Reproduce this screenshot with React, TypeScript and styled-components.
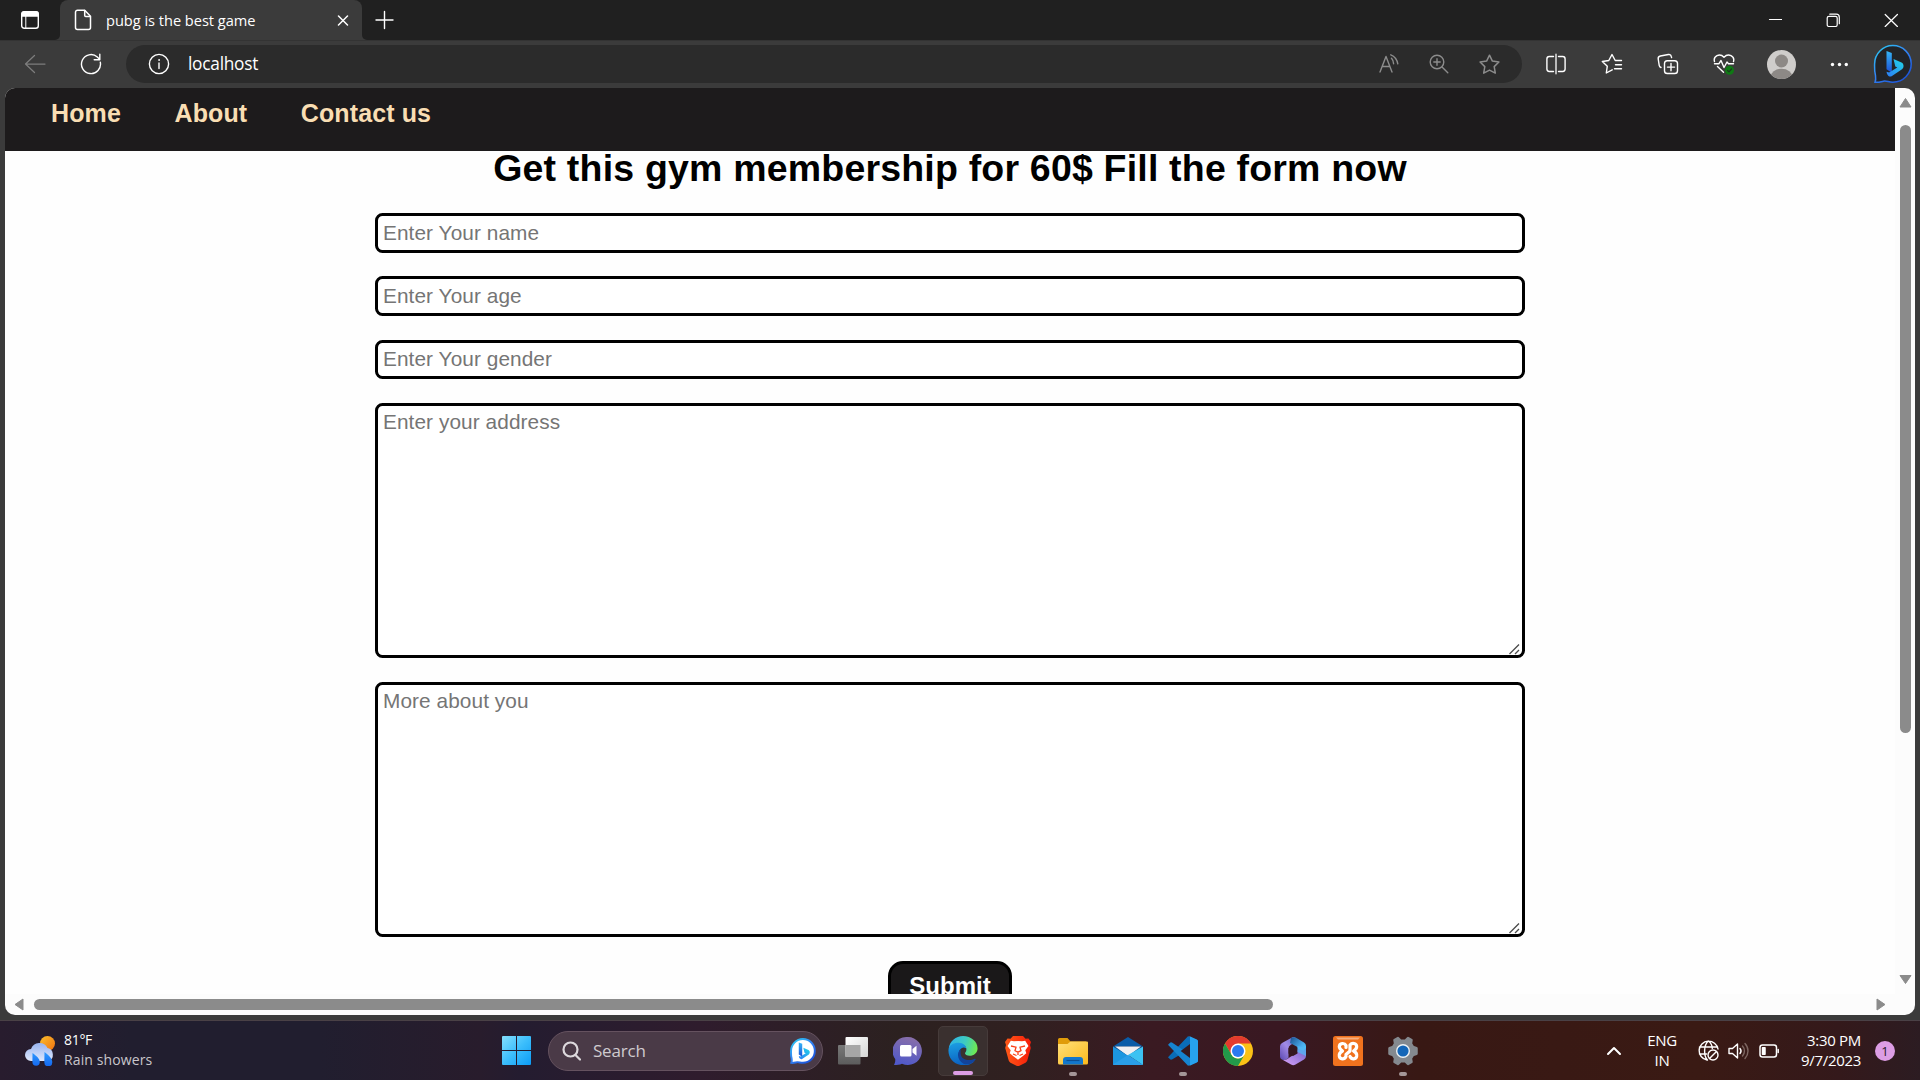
import React from "react";
import styled, { createGlobalStyle } from "styled-components";

const GlobalStyle = createGlobalStyle`
  * { box-sizing: border-box; }
  body { margin: 0; background: #3b3b3b; overflow: hidden; }
`;

const ui = `"Open Sans", "Noto Sans", sans-serif`;
const arial = `"Liberation Sans", Arial, sans-serif`;

const Screen = styled.div`
  width: 1920px;
  height: 1080px;
  display: flex;
  flex-direction: column;
  background: #3b3b3b;
  font-family: ${ui};
  overflow: hidden;
`;

/* Title bar */
const TitleBar = styled.div`
  height: 40px;
  display: flex;
  background: #3b3b3b;
`;
const TabActions = styled.div`
  width: 60px;
  display: flex;
  align-items: center;
  justify-content: center;
  background: #202020;
  border-bottom-right-radius: 5px;
`;
const Tab = styled.div`
  width: 302px;
  display: flex;
  align-items: center;
  padding: 0 13px 0 14px;
  background: #3b3b3b;
`;
const TabWrap = styled.div`
  background: #202020;
  ${Tab} { height: 40px; border-radius: 8px 8px 0 0; }
`;
const TabTitle = styled.span`
  margin-left: 14px;
  flex: 1;
  font-size: 14.6px;
  line-height: 20px;
  letter-spacing: -0.02px;
  white-space: nowrap;
  color: #fff;
`;
const TabStrip = styled.div`
  flex: 1;
  display: flex;
  align-items: center;
  justify-content: space-between;
  padding-left: 12px;
  background: #202020;
  border-bottom-left-radius: 5px;
`;
const WindowButtons = styled.div`
  display: flex;
  height: 40px;
`;
const Cell = styled.div<{ $w: number }>`
  width: ${(p) => p.$w}px;
  flex: none;
  display: flex;
  align-items: center;
  justify-content: center;
`;

/* Toolbar */
const Toolbar = styled.div`
  height: 48px;
  display: flex;
  align-items: center;
  padding-left: 7px;
  box-shadow: inset 0 1px 0 #333;
  background: #3b3b3b;
`;
const AddressBar = styled.div`
  width: 1396px;
  height: 38px;
  margin-left: 7px;
  margin-right: 6px;
  display: flex;
  align-items: center;
  padding: 0 8px 0 8px;
  border-radius: 19px;
  background: #2b2b2b;
`;
const Url = styled.span`
  flex: 1;
  margin-left: 4px;
  font-size: 17.3px;
  line-height: 24px;
  letter-spacing: -0.25px;
  color: #fff;
`;

/* Viewport */
const Viewport = styled.div`
  width: 1910px;
  height: 927px;
  margin-left: 5px;
  display: grid;
  grid-template-columns: 1890px 20px;
  grid-template-rows: 906px 21px;
  border-radius: 10px;
  overflow: hidden;
`;
const Page = styled.div`
  overflow: hidden;
  background: #fefefe;
  font-family: ${arial};
`;
const Nav = styled.nav`
  height: 63px;
  display: flex;
  gap: 53.5px;
  padding: 11px 0 0 46px;
  background: #1d1b1c;
`;
const NavLink = styled.a`
  font-size: 25px;
  line-height: 29px;
  font-weight: bold;
  letter-spacing: 0.12px;
  color: #f9deb3;
`;
const Form = styled.form`
  display: flex;
  flex-direction: column;
  align-items: center;
`;
const Heading = styled.h1`
  margin: 0 0 28px;
  font-size: 37.5px;
  line-height: 34px;
  font-weight: bold;
  letter-spacing: 0.19px;
  color: #000;
  white-space: nowrap;
`;
const Input = styled.input`
  width: 1150px;
  height: 39.5px;
  margin: 0 0 23.75px;
  padding: 0 5px;
  border: 3px solid #000;
  border-radius: 7.5px;
  background: #fff;
  font: 20.8px ${arial};
  letter-spacing: 0.08px;
  outline: none;
  &::placeholder { color: #757575; }
`;
const Field = styled.div`
  position: relative;
  width: 1150px;
  height: 255px;
  margin: 0 0 24px;
`;
const TextArea = styled.textarea`
  display: block;
  width: 100%;
  height: 100%;
  padding: 4px 5px;
  border: 3px solid #000;
  border-radius: 7.5px;
  background: #fff;
  font: 20.8px/24px ${arial};
  letter-spacing: 0.08px;
  outline: none;
  resize: none;
  &::placeholder { color: #757575; }
`;
const Grip = styled.svg`
  position: absolute;
  right: 4px;
  bottom: 3px;
`;
const Submit = styled.button`
  width: 124px;
  height: 50px;
  flex: none;
  padding: 0;
  border: 3px solid #000;
  border-radius: 15px;
  background: #1a1819;
  color: #fff;
  font: bold 24px ${arial};
`;
const VScroll = styled.div`
  background: #fcfcfc;
  display: flex;
  flex-direction: column;
  align-items: center;
  padding: 9px 0 9px 0;
`;
const HScroll = styled.div`
  background: #fcfcfc;
  display: flex;
  align-items: center;
  padding: 0 9px;
`;
const Corner = styled.div`
  background: #fcfcfc;
`;
const Thumb = styled.div<{ $w: number; $h: number }>`
  width: ${(p) => p.$w}px;
  height: ${(p) => p.$h}px;
  border-radius: 6px;
  background: #8b8b8b;
`;
const Gap = styled.div<{ $s?: number }>`
  flex: ${(p) => (p.$s ? `0 0 ${p.$s}px` : "1")};
`;

/* Taskbar */
const Taskbar = styled.div`
  height: 60px;
  margin-top: 5px;
  display: flex;
  align-items: center;
  border-top: 1px solid #4a4146;
  color: #fff;
  background: linear-gradient(90deg, #281c2e 0, #211e2f 130px, #211e2f 320px, #281c2c 480px, #241c30 520px, #2f1c2d 700px, #2c2120 900px, #302020 1020px, #3a1a22 1150px, #391822 1280px, #381814 1420px, #3a1a14 1700px, #34191b 1840px, #2c1c22 1920px);
`;
const Weather = styled.div`
  width: 502px;
  display: flex;
  align-items: center;
  padding-left: 25px;
  gap: 9px;
`;
const Lines = styled.div<{ $align?: string; $size?: number }>`
  display: flex;
  flex-direction: column;
  align-items: ${(p) => p.$align || "flex-start"};
  padding-bottom: 2px;
  font-size: ${(p) => p.$size || 14}px;
  line-height: 20px;
  letter-spacing: -0.3px;
  white-space: nowrap;
`;
const Dim = styled.span`
  color: #c9c6cc;
  letter-spacing: 0.12px;
`;
const SearchBox = styled.div`
  width: 275px;
  height: 40px;
  margin: 0 5px 0 17px;
  display: flex;
  align-items: center;
  padding: 0 6px 0 13px;
  border-radius: 20px;
  border: 1px solid #65525f;
  background: #4a3a47;
`;
const SearchText = styled.span`
  flex: 1;
  margin-left: 12px;
  font-size: 17px;
  line-height: 24px;
  letter-spacing: -0.2px;
  color: #cfcacf;
`;
const Apps = styled.div`
  display: flex;
  gap: 5px;
`;
const AppButton = styled.div<{ $active?: boolean }>`
  width: 50px;
  height: 50px;
  display: flex;
  flex-direction: column;
  align-items: center;
  padding-top: ${(p) => (p.$active ? 9 : 10)}px;
  border-radius: 5px;
  border: ${(p) => (p.$active ? "1px solid #463b3a" : "0")};
  background: ${(p) => (p.$active ? "#3a302f" : "transparent")};
`;
const Indicator = styled.div<{ $active?: boolean }>`
  width: ${(p) => (p.$active ? 20 : 8)}px;
  height: 4px;
  margin-top: 6px;
  border-radius: 2px;
  background: ${(p) => (p.$active ? "#dc9de4" : "#a49698")};
`;
const Tray = styled.div`
  flex: 1;
  display: flex;
  align-items: center;
  justify-content: flex-end;
`;
const Clock = styled.div`
  width: 78px;
`;
const Count = styled.div`
  width: 20px;
  height: 20px;
  margin: 0 25px 0 14px;
  border-radius: 10px;
  background: #dc9de4;
  color: #2a1a2c;
  font-size: 13px;
  line-height: 20px;
  text-align: center;
`;

type IconProps = { w: number; h: number; c?: string; sw?: number; children: React.ReactNode };
const Icon = ({ w, h, c = "#fff", sw = 1.25, children }: IconProps) => (
  <svg width={w} height={h} viewBox={`0 0 ${w} ${h}`} fill="none" stroke={c} strokeWidth={sw} strokeLinecap="round" strokeLinejoin="round">
    {children}
  </svg>
);
const Art = ({ size = 30, children }: { size?: number; children: React.ReactNode }) => (
  <svg width={size} height={size} viewBox="0 0 30 30">{children}</svg>
);
const Arrow = ({ d, w, h }: { d: string; w: number; h: number }) => (
  <svg width={w} height={h} viewBox={`0 0 ${w} ${h}`}>
    <path d={d} fill="#8b8b8b" stroke="#8b8b8b" strokeLinejoin="round" strokeWidth="1" />
  </svg>
);
const ResizeGrip = () => (
  <Grip width="13" height="13" viewBox="0 0 13 13">
    <path d="M1.500 12L11 2.500M7 12l4-4" stroke="#4a4a4a" strokeWidth="1.300" />
  </Grip>
);

const WorkspaceIcon = () => (
  <Icon w={20} h={20} sw={1.4}>
    <rect x="1.7" y="1.7" width="16.6" height="16.6" rx="2.5" />
    <path d="M2 3.5 a1.5 1.5 0 0 1 1.5-1.5h13a1.5 1.5 0 0 1 1.5 1.5V6H2z" fill="#fff" />
    <path d="M5.8 6v12" strokeWidth="1" />
  </Icon>
);
const PageIcon = () => (
  <Icon w={18} h={22} sw={1.5}>
    <path d="M3.5 1.2h7.2l5.8 6v11.3a2 2 0 0 1-2 2h-11a2 2 0 0 1-2-2V3.200a2 2 0 0 1 2-2z" />
    <path d="M10.700 1.500v5a1 1 0 0 0 1 1h4.600" />
  </Icon>
);
const ReloadIcon = () => (
  <Icon w={22} h={22} sw={1.4}>
    <path d="M20.300 9.200a9.500 9.500 0 1 1-3-5.200l2.500 2.400M19.800 1.300v5.400h-5.600" />
  </Icon>
);
const star = "M10.500 1.200l2.900 5.900 6.500.9-4.700 4.600 1.100 6.500-5.800-3-5.800 3 1.100-6.500L1.100 8l6.500-.9z";

const BingMark = ({ id, light }: { id: string; light?: boolean }) => (
  <svg width={light ? 26 : 40} height={light ? 26 : 40} viewBox="0 0 40 40">
    <defs>
      <linearGradient id={id + "r"} x1="0" y1="0" x2="0.8" y2="1"><stop stopColor="#2ad0f2" /><stop offset="0.5" stopColor="#3385f5" /><stop offset="1" stopColor="#1a50d8" /></linearGradient>
      <linearGradient id={id + "v"} x1="0" y1="0" x2="0" y2="1"><stop stopColor="#35b6f8" /><stop offset="1" stopColor="#1c50d6" /></linearGradient>
      <linearGradient id={id + "b"} x1="1" y1="0" x2="0" y2="1"><stop stopColor="#22d8e8" /><stop offset="1" stopColor="#2b7bf5" /></linearGradient>
    </defs>
    <path d="M2 38.200c1.200-2.500.8-4.200.4-7.200C1.300 27.500 1.600 24 1.600 20A18.300 18.300 0 1 1 20 38.200c-4 .2-6.500-1.600-9.500-1-2.800.5-5 1.600-8.500 1z" fill={light ? "#fff" : "#222428"} stroke={`url(#${id}r)`} strokeWidth={light ? 3 : 1.500} />
    <path d="M13.500 7l5.300 2v19.800l-5.300-3.500z" fill={`url(#${id}v)`} />
    <path d="M20.500 15l8 3.500c2.500 1.300 2.700 5 .5 6.800L18.600 32.300c-2.500 1.200-5-1.500-5-4.500l2.500.8 8.200-5.200-2-.9z" fill={`url(#${id}b)`} />
  </svg>
);

const WeatherArt = () => (
  <Art>
    <defs>
      <linearGradient id="sun" x1="0" y1="0" x2="1" y2="1"><stop stopColor="#fbc02d" /><stop offset="1" stopColor="#f07010" /></linearGradient>
      <linearGradient id="cld" x1="0" y1="0" x2="0" y2="1"><stop stopColor="#98b4f0" /><stop offset="1" stopColor="#dfe8fc" /></linearGradient>
      <linearGradient id="drp" x1="0" y1="0" x2="0" y2="1"><stop stopColor="#2f9bff" /><stop offset="1" stopColor="#1468f0" /></linearGradient>
    </defs>
    <circle cx="22.500" cy="7.500" r="7.500" fill="url(#sun)" />
    <path d="M6 25a6 6 0 0 1 0-12 9 9 0 0 1 16.500-1A6.800 6.800 0 0 1 23.500 25z" fill="url(#cld)" />
    <path d="M7.500 17c4 3 7.500 6 7.300 9a3.700 3.700 0 0 1-7.400 0zM19.500 16c4.500 3.500 8 7 7.800 10.300a4 4 0 0 1-8 0z" fill="url(#drp)" />
  </Art>
);
const StartArt = () => (
  <svg width="29" height="29" viewBox="0 0 29 29">
    <defs><linearGradient id="win" x1="0" y1="0" x2="1" y2="1"><stop stopColor="#85dffd" /><stop offset="0.5" stopColor="#3cbefc" /><stop offset="1" stopColor="#0c9bf5" /></linearGradient></defs>
    <path d="M1 0h13v14H0V1a1 1 0 0 1 1-1zM15 0h13a1 1 0 0 1 1 1v13H15zM0 15h14v14H1a1 1 0 0 1-1-1zM15 15h14v13a1 1 0 0 1-1 1H15z" fill="url(#win)" />
  </svg>
);
const TaskViewArt = () => (
  <Art>
    <defs>
      <linearGradient id="tv1" x1="0" y1="0" x2="1" y2="1"><stop stopColor="#fff" /><stop offset="1" stopColor="#d5d5d5" /></linearGradient>
      <linearGradient id="tv2" x1="0" y1="0" x2="0" y2="1"><stop stopColor="#787878" /><stop offset="1" stopColor="#5c5c5c" /></linearGradient>
    </defs>
    <rect x="0" y="9" width="22.500" height="19.500" rx="1" fill="url(#tv2)" />
    <rect x="7.500" y="1" width="22.500" height="20" rx="1" fill="url(#tv1)" />
    <path d="M7.500 9h15v12h-15z" fill="#a6a6a6" />
  </Art>
);
const ChatArt = () => (
  <Art>
    <defs><linearGradient id="cht" x1="0.700" y1="0" x2="0.400" y2="1"><stop stopColor="#8a6fa8" /><stop offset="1" stopColor="#5059c9" /></linearGradient></defs>
    <path d="M15 1a14 14 0 1 1-6 26.700c-2.500 1-5 1.300-8 1.300 1-2 1.500-3.500 1.200-6A14 14 0 0 1 15 1z" fill="url(#cht)" />
    <rect x="7" y="9" width="11.500" height="11.500" rx="1.500" fill="#fff" />
    <path d="M19.500 13l4-3.300v10l-4-3.300z" fill="#fff" />
  </Art>
);
const EdgeArt = () => (
  <Art>
    <defs>
      <linearGradient id="e1" x1="0" y1="0.300" x2="1" y2="0.500"><stop stopColor="#2db2ea" /><stop offset="0.550" stopColor="#3ecbc0" /><stop offset="1" stopColor="#6fea50" /></linearGradient>
      <linearGradient id="e2" x1="0.300" y1="0" x2="0.500" y2="1"><stop stopColor="#1b9de2" /><stop offset="1" stopColor="#0a5fc0" /></linearGradient>
    </defs>
    <path d="M.3 13C1.500 5 7.500 0 15 0c8.500 0 15 6 15 12.500 0 5-4 7.800-8 7.800-3.200 0-5-1.300-5-2.500 0-.8 1.500-1.600 1.500-4 0-3-3-5-6.500-5C7 8.800 2.500 10 .3 13z" fill="url(#e1)" />
    <path d="M0 15C0 9.500 5 7 10.500 7c5 0 8 3.500 8 6.500 0-1.500-3-2.500-5-1-4 2.500-3.500 9 0 12.500 4 4 9 3.500 13.500.5C23 30.500 17 30.500 14 30 5.500 29.500 0 23 0 15z" fill="url(#e2)" />
    <path d="M12.500 13.500c-5 5-2.500 12 3 15 5 2 10-.5 12.300-4 .6-.8 0-1.500-.8-1-5 2.700-14 1.500-14.500-5.500z" fill="#12439a" />
  </Art>
);
const BraveArt = () => (
  <Art>
    <defs><linearGradient id="brv" x1="0" x2="1"><stop stopColor="#ff5a18" /><stop offset="1" stopColor="#f51c0a" /></linearGradient></defs>
    <path d="M10 0h10l2.500 2.700 3-.2L28 6l-1 3 .8 3-3.500 12.500a5 5 0 0 1-1.800 2.200L15 30.500l-7.500-3.800a5 5 0 0 1-1.800-2.200L2.200 12 3 9 2 6l2.500-3.500 3 .2z" fill="url(#brv)" />
    <path d="M15 5l4 .3 3.200-.6 3.300 5.300-3.200 4.200 1 3-4 3.300-4.300 3.300-4.300-3.300-4-3.300 1-3L4.500 10l3.300-5.300 3.200.6z" fill="#fff" />
    <path d="M8 10l5 1.200-1 3.500 3 1.500 3-1.500-1-3.500 5-1.200M15 16v3M10 18l3.500 1.500M20 18l-3.500 1.500" fill="none" stroke="#fb4018" strokeWidth="1.300" />
  </Art>
);
const FolderArt = () => (
  <Art>
    <defs><linearGradient id="fld" x1="0" y1="0" x2="1" y2="1"><stop stopColor="#ffe07a" /><stop offset="1" stopColor="#fbb91c" /></linearGradient></defs>
    <path d="M0 3.500A1.500 1.500 0 0 1 1.500 2h8l3 3.500H28V12H0z" fill="#e09c0a" />
    <path d="M0 8h9.500l3-2.500H29a1 1 0 0 1 1 1V27a1.500 1.500 0 0 1-1.500 1.500h-27A1.500 1.500 0 0 1 0 27z" fill="url(#fld)" />
    <path d="M5 28.500V24a3 3 0 0 1 3-3h14a3 3 0 0 1 3 3v4.500z" fill="#1277cc" />
    <path d="M8.500 24.500h13" stroke="#0b4f94" strokeWidth="1.200" />
  </Art>
);
const MailArt = () => (
  <Art>
    <path d="M15 1l15 9.500H0z" fill="#0a5ca8" />
    <path d="M0 10.500h30L17 20h-4z" fill="#0a4f96" />
    <path d="M2 10.500h26L15 20z" fill="#f0f0f2" />
    <path d="M0 10.500L30 29H1a1 1 0 0 1-1-1z" fill="#1c96e0" />
    <path d="M30 10.500V29L15 19z" fill="#3cc2f2" />
    <path d="M0 28.500L15 19l15 10H1a1 1 0 0 1-1-.5z" fill="#2a9ee8" />
  </Art>
);
const CodeArt = () => (
  <Art>
    <path d="M20 .3L29 4a1.600 1.600 0 0 1 1 1.500V8L4 23.500 2.800 23.700.7 22a1 1 0 0 1 0-1.600z" fill="#0a6cb8" />
    <path d="M.7 8L2.800 6.300 4 6.400 30 24v1.500l-10 4.200L.7 9.600A1 1 0 0 1 .7 8z" fill="#1684d0" />
    <path d="M21.700.2L28.900 3.500A1.900 1.900 0 0 1 30 5.200v19.600a1.900 1.900 0 0 1-1.100 1.700L21.700 29.800c-.7.300-1.700 0-2-.4.900.8 2.300.2 2.300-1V1.600c0-1.200-1.400-1.800-2.300-1 .5-.6 1.300-.7 2-.4z" fill="#27a2ee" />
    <path d="M22 8v14l-9.300-7z" fill="#35191f" />
  </Art>
);
const ChromeArt = () => (
  <Art>
    <circle cx="15" cy="15" r="15" fill="#fbc116" />
    <path d="M2 7.500A15 15 0 0 1 28 7.500H15L8.500 18.800z" fill="#e33b2e" />
    <path d="M2 7.500a15 15 0 0 0 13 22.500l6.500-11.300a7.500 7.500 0 0 1-13 0z" fill="#229a4a" />
    <circle cx="15" cy="15" r="7.500" fill="#fff" />
    <circle cx="15" cy="15" r="6" fill="#2a7af0" />
  </Art>
);
const M365Art = () => (
  <Art>
    <defs>
      <linearGradient id="m1" x1="1" y1="0" x2="0" y2="1"><stop stopColor="#5c68c8" /><stop offset="0.500" stopColor="#a28ae6" /><stop offset="1" stopColor="#5a48b0" /></linearGradient>
      <linearGradient id="m2" x1="0" y1="0" x2="1" y2="1"><stop stopColor="#1a4f8c" /><stop offset="0.600" stopColor="#4ab0f0" /><stop offset="1" stopColor="#50d8ff" /></linearGradient>
      <linearGradient id="m3" x1="1" y1="0" x2="0" y2="1"><stop stopColor="#6f60c8" /><stop offset="1" stopColor="#d8a2f8" /></linearGradient>
    </defs>
    <path d="M14 1.500L4 7a4 4 0 0 0-2 3.500v10c0 3 3.500 4.500 6 3l2.500-1.500V12.500a4 4 0 0 1 2-3.500L19 5c0-3-2.500-5-5-3.500z" fill="url(#m1)" />
    <path d="M13 2c2-1.200 4-.8 5.500 0L26 6.500a4 4 0 0 1 2 3.500v10c0-1.500-1-3-2.500-4l-6-3.300V11L12 7z" fill="url(#m2)" />
    <path d="M28 12v8a4 4 0 0 1-2 3.500l-8.500 5a4.500 4.500 0 0 1-4.500 0L5 24c3 .5 5-1.500 8-3.500l5-3 1.500-4.500 6 1.500z" fill="url(#m3)" />
    <path d="M15 9.500l4.500 2.700v5.300L15 20l-4.500-2.500v-5.300z" fill="#341820" />
    <path d="M19.500 10l8.500 2v8l-8.500-4z" fill="#52b8f4" opacity=".75" />
  </Art>
);
const XamppArt = () => (
  <Art>
    <rect width="30" height="30" rx="2.500" fill="#f0721e" />
    <path d="M3 1.500h24l-2 2H5z" fill="#f8b080" />
    <path d="M13 11.500V9.500C11.500 6.500 6.500 7 6.300 10.500c0 2 1.200 3 3.200 4.500-2 1-3.500 2.500-3.200 5 .5 3.500 5 4 6.700.5v-2l4-3.500v-6c2-2.500 6.500-2 6.700 1.500 0 2-1.200 3.300-3.200 4.500 2 1 3.500 2.500 3.200 5-.5 3.500-5 4-6.700.5" fill="none" stroke="#fff" strokeWidth="3.200" strokeLinecap="round" strokeLinejoin="round" />
  </Art>
);
const SettingsArt = () => (
  <Art>
    <g fill="#84898f" stroke="#84898f" strokeWidth="2.500" strokeLinejoin="round">
      <path d="M10 2l2.500 2.700h5L20 2l3.500 2-.6 3.600 2 3.400 3.600 1.200v5.600L24.900 19l-2 3.400.6 3.600L20 28l-2.500-2.700h-5L10 28l-3.500-2 .6-3.600L5.100 19l-3.600-1.200v-5.600L5.100 11l2-3.400L6.500 4z" />
    </g>
    <circle cx="15" cy="15" r="7" fill="#eef2f5" />
    <circle cx="15" cy="15" r="5.600" fill="#1466b8" />
  </Art>
);

const apps: { name: string; art: React.ReactNode; active?: boolean; open?: boolean }[] = [
  { name: "taskview", art: <TaskViewArt /> },
  { name: "chat", art: <ChatArt /> },
  { name: "edge", art: <EdgeArt />, active: true },
  { name: "brave", art: <BraveArt /> },
  { name: "explorer", art: <FolderArt />, open: true },
  { name: "mail", art: <MailArt /> },
  { name: "code", art: <CodeArt />, open: true },
  { name: "chrome", art: <ChromeArt /> },
  { name: "m365", art: <M365Art /> },
  { name: "xampp", art: <XamppArt /> },
  { name: "settings", art: <SettingsArt />, open: true },
];

export default function App() {
  return (
    <Screen>
      <GlobalStyle />
      <TitleBar>
        <TabActions><WorkspaceIcon /></TabActions>
        <TabWrap>
          <Tab>
            <PageIcon />
            <TabTitle>pubg is the best game</TabTitle>
            <Icon w={12} h={12} sw={1.5}><path d="M1.500 2l9 9M10.500 2l-9 9" /></Icon>
          </Tab>
        </TabWrap>
        <TabStrip>
          <Icon w={20} h={20} sw={1.400}><path d="M10.500 1.500v17M2 10h17" /></Icon>
          <WindowButtons>
            <Cell $w={58}><Icon w={14} h={14} sw={1.200}><path d="M1.500 6.500h12" /></Icon></Cell>
            <Cell $w={58}>
              <Icon w={14} h={14} sw={1.200}>
                <rect x="1.200" y="3.300" width="10" height="10.200" rx="1.800" />
                <path d="M3.800 1.200h6.500a3 3 0 0 1 3 3v6.500" />
              </Icon>
            </Cell>
            <Cell $w={58}><Icon w={14} h={14} sw={1.200}><path d="M1.200 1.500l12.200 12M13.400 1.500L1.200 13.500" /></Icon></Cell>
          </WindowButtons>
        </TabStrip>
      </TitleBar>

      <Toolbar>
        <Cell $w={56}><Icon w={22} h={20} c="#7d7d7d"><path d="M21 10H1.500M10.500 1.500l-9 8.500 9 8.500" /></Icon></Cell>
        <Cell $w={56}><ReloadIcon /></Cell>
        <AddressBar>
          <Cell $w={50}>
            <Icon w={22} h={22} sw={1.400}>
              <circle cx="11" cy="11" r="9.600" />
              <path d="M11 10v5.500" />
              <circle cx="11" cy="7" r=".5" fill="#fff" strokeWidth=".8" />
            </Icon>
          </Cell>
          <Url>localhost</Url>
          <Cell $w={50}>
            <Icon w={20} h={20} c="#8c8c8c" sw={1.400}>
              <path d="M1 18L7 2.500l6 15.500M3.300 12.500h7.400M12.500 4.200c1.400 1.500 2.100 3.300 2.100 5.600M11.800.8c3.600 1.400 6.300 5 7 9" />
            </Icon>
          </Cell>
          <Cell $w={50}>
            <Icon w={20} h={20} c="#8c8c8c" sw={1.400}>
              <circle cx="8" cy="8" r="6.800" />
              <path d="M13 13l5.800 5.800M8 4.800v6.400M4.800 8h6.400" />
            </Icon>
          </Cell>
          <Cell $w={50}><Icon w={21} h={20} c="#8c8c8c" sw={1.500}><path d={star} /></Icon></Cell>
        </AddressBar>
        <Cell $w={56}>
          <Icon w={20} h={22} sw={1.400}>
            <path d="M7.500 3.500H3.300a2.400 2.400 0 0 0-2.400 2.400v10.200a2.400 2.400 0 0 0 2.400 2.400h4.200M12.500 3.500h4.200a2.400 2.400 0 0 1 2.400 2.400v10.200a2.400 2.400 0 0 1-2.400 2.400h-4.200" />
            <path d="M10 1.500v19" stroke="#c8c8c8" strokeWidth="1.800" />
          </Icon>
        </Cell>
        <Cell $w={56}>
          <Icon w={22} h={22} sw={1.400}>
            <path d="M11.200 16.800L5.300 20l1-6.800-5-4.700 6.500-1L11 1.500l3.200 6h6.300M14.500 11.700h6M13.500 15.700h7" />
          </Icon>
        </Cell>
        <Cell $w={56}>
          <Icon w={22} h={22} sw={1.400}>
            <rect x="7.500" y="7.700" width="13" height="12.800" rx="2.800" />
            <path d="M14 10.500v7.200M10.400 14.100h7.200M4 14.500a3 3 0 0 1-1.800-2.200L1.200 6a2.700 2.700 0 0 1 2.200-3l8-1.500a2.500 2.500 0 0 1 2.900 2l.3 1" />
          </Icon>
        </Cell>
        <Cell $w={56}>
          <Icon w={22} h={22} sw={1.400}>
            <path d="M1.500 8.500C0 3.500 6.500-.5 11 4.200 15.500-.5 22 3.500 20.500 8.500M1.500 10.800h4.300l2.200-3.300 3 7 3-5.500 1.500 1.800h5M4.500 13.500l6 5.700" />
            <circle cx="16.500" cy="17.300" r="4.500" fill="#0f7a14" stroke="none" />
            <path d="M14.500 17.500l1.500 1.300 2.500-2.800" stroke="#1b3b1c" strokeWidth="1.200" />
          </Icon>
        </Cell>
        <Cell $w={58}>
          <svg width="29" height="29" viewBox="0 0 29 29">
            <clipPath id="av"><circle cx="14.500" cy="14.500" r="14.500" /></clipPath>
            <g clipPath="url(#av)">
              <rect width="29" height="29" fill="#cfcdcb" />
              <circle cx="14.500" cy="11" r="6.500" fill="#8d8986" />
              <ellipse cx="14.500" cy="27" rx="11" ry="8.300" fill="#8d8986" />
            </g>
          </svg>
        </Cell>
        <Cell $w={58}>
          <Icon w={18} h={6}><g fill="#fff" stroke="none"><circle cx="2.500" cy="3.500" r="1.700" /><circle cx="9.500" cy="3.500" r="1.700" /><circle cx="16.300" cy="3.500" r="1.700" /></g></Icon>
        </Cell>
        <Cell $w={50}><BingMark id="bt" /></Cell>
      </Toolbar>

      <Viewport>
        <Page>
          <Nav>
            <NavLink>Home</NavLink>
            <NavLink>About</NavLink>
            <NavLink>Contact us</NavLink>
          </Nav>
          <Form>
            <Heading>Get this gym membership for 60$ Fill the form now</Heading>
            <Input placeholder="Enter Your name" />
            <Input placeholder="Enter Your age" />
            <Input placeholder="Enter Your gender" />
            <Field><TextArea placeholder="Enter your address" /><ResizeGrip /></Field>
            <Field><TextArea placeholder="More about you" /><ResizeGrip /></Field>
            <Submit type="button">Submit</Submit>
          </Form>
        </Page>
        <VScroll>
          <Arrow w={13} h={11} d="M6.500 1.500L12 10H1z" />
          <Gap $s={17} />
          <Thumb $w={11} $h={608} />
          <Gap />
          <Arrow w={13} h={11} d="M1 1.500h11L6.500 9.500z" />
        </VScroll>
        <HScroll>
          <Arrow w={10} h={13} d="M9 1v11L1 6.500z" />
          <Gap $s={10} />
          <Thumb $w={1239} $h={11} />
          <Gap />
          <Arrow w={10} h={13} d="M1 1v11l8-5.500z" />
        </HScroll>
        <Corner />
      </Viewport>

      <Taskbar>
        <Weather>
          <WeatherArt />
          <Lines><span>81°F</span><Dim>Rain showers</Dim></Lines>
        </Weather>
        <StartArt />
        <SearchBox>
          <Icon w={19} h={20} c="#dcd8dc" sw={2.200}><circle cx="8.500" cy="8.500" r="7" /><path d="M13.500 14l4.500 4.500" /></Icon>
          <SearchText>Search</SearchText>
          <BingMark id="bs" light />
        </SearchBox>
        <Apps>
          {apps.map((a) => (
            <AppButton key={a.name} $active={a.active}>
              {a.art}
              {(a.active || a.open) && <Indicator $active={a.active} />}
            </AppButton>
          ))}
        </Apps>
        <Tray>
          <Cell $w={48}><Icon w={16} h={10} sw={2}><path d="M2 8l6-6 6 6" /></Icon></Cell>
          <Cell $w={48}><Lines $align="center" $size={15}><span>ENG</span><span>IN</span></Lines></Cell>
          <Gap $s={9} />
          <Cell $w={27}>
            <Icon w={21} h={21} sw={1.400}>
              <path d="M9 20A9.500 9.500 0 1 1 20 9M1.500 7h18M1.500 14h7M9.500 20C5.500 16 5.500 5 10.500 1 13 3 14.300 6 14.300 8.500" />
              <circle cx="15" cy="15" r="5" />
              <path d="M11.500 18.500l7-7" />
            </Icon>
          </Cell>
          <Cell $w={33}>
            <Icon w={21} h={20} sw={1.400}>
              <path d="M1 7.500h3.500L9.500 3v14l-5-4.500H1zM12 7.500c1.200 1.400 1.200 3.600 0 5" />
              <path d="M14.500 5c2.600 2.800 2.600 7.200 0 10M17 2.500c4 4.300 4 10.700 0 15" stroke="#7d6661" />
            </Icon>
          </Cell>
          <Cell $w={28}>
            <Icon w={21} h={14} sw={1.500}>
              <rect x="1" y="1" width="16.500" height="12" rx="2.500" />
              <path d="M3.500 3.800h2.500v6.400H3.500zM19.200 5.500v3" fill="#fff" />
            </Icon>
          </Cell>
          <Clock><Lines $align="flex-end" $size={15}><span>3:30 PM</span><span>9/7/2023</span></Lines></Clock>
          <Count>1</Count>
        </Tray>
      </Taskbar>
    </Screen>
  );
}
